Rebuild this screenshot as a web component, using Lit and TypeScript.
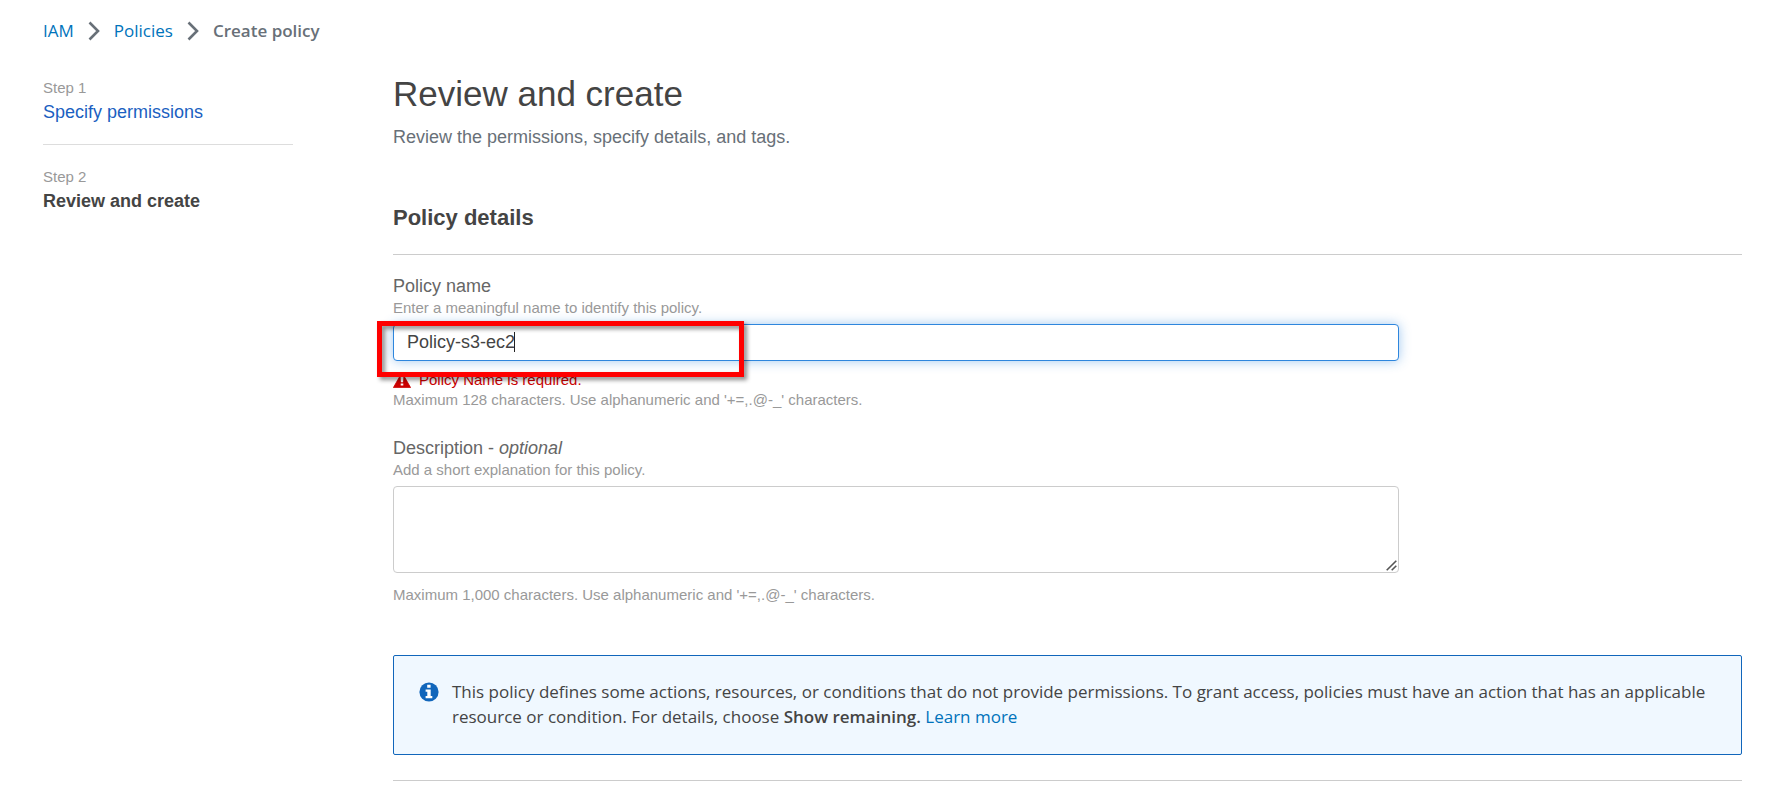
import { LitElement, html, css, svg } from "lit";
import { customElement, state } from "lit/decorators.js";

const chevron = html`<svg class="chevron" viewBox="0 0 12 20" aria-hidden="true">
  ${svg`<path d="M1.5 1.5 L10 10 L1.5 18.5" fill="none" stroke="#687078" stroke-width="2.6" />`}
</svg>`;

@customElement("app-root")
export class AppRoot extends LitElement {
  @state() private policyName = "Policy-s3-ec2";

  static styles = css`
    :host {
      display: block;
      box-sizing: border-box;
      padding: 18px 49px 8px 43px;
      background: #fff;
      color: #444;
      font: 18px/24px "Liberation Sans", Arial, sans-serif;
    }
    *,
    *::before {
      box-sizing: border-box;
    }
    h1,
    h2,
    p,
    ol {
      margin: 0;
      padding: 0;
    }
    ol {
      list-style: none;
    }
    a {
      color: #0073bb;
      text-decoration: none;
    }
    .crumbs ol {
      display: flex;
      align-items: center;
      font: 17px/26px "Open Sans", "Noto Sans", sans-serif;
    }
    .crumbs li {
      display: flex;
      align-items: center;
    }
    .crumbs .current {
      color: #687078;
      font-weight: 600;
    }
    .chevron {
      width: 12px;
      height: 20px;
      margin: 0 14px;
    }
    .layout {
      display: grid;
      grid-template-columns: 250px minmax(0, 1fr);
      column-gap: 100px;
      padding-top: 27px;
    }
    .steps {
      padding-top: 7px;
    }
    .step + .step {
      margin-top: 18px;
      padding-top: 22px;
      border-top: 1px solid #ddd;
    }
    .step a,
    .step strong {
      display: block;
      line-height: 28px;
    }
    .step a {
      color: #1b5fc1;
    }
    .step strong {
      color: #444;
    }
    .hint {
      color: #999;
      font-size: 15px;
      line-height: 20px;
    }
    h1 {
      font-size: 35px;
      font-weight: 400;
      line-height: 46px;
    }
    .lead {
      margin-top: 8px;
      color: #687078;
    }
    h2 {
      margin-top: 54px;
      padding-bottom: 21px;
      border-bottom: 1px solid #ccc;
      font-size: 22px;
      line-height: 30px;
    }
    .fields {
      display: grid;
      grid-template-columns: minmax(0, 3fr) minmax(0, 1fr);
      column-gap: 8px;
      row-gap: 27px;
      padding-top: 20px;
    }
    .field {
      grid-column: 1;
    }
    label {
      display: block;
      color: #666;
      line-height: 23px;
    }
    .control {
      position: relative;
      margin-top: 6px;
    }
    input,
    textarea {
      display: block;
      width: 100%;
      margin: 0;
      padding: 0 13px;
      border: 1px solid #ccc;
      border-radius: 4px;
      outline: none;
      background: #fff;
      color: #444;
      font: inherit;
    }
    input {
      height: 37px;
      border-color: #2e86dd;
      box-shadow: 0 0 12px rgba(46, 134, 221, 0.45);
      caret-color: transparent;
    }
    textarea {
      height: 87px;
      resize: vertical;
    }
    textarea::-webkit-resizer {
      background: transparent;
    }
    .grip {
      position: absolute;
      right: 2px;
      bottom: 2px;
      width: 11px;
      height: 11px;
      pointer-events: none;
    }
    .caret {
      position: absolute;
      top: 8px;
      left: 121px;
      width: 1px;
      height: 20px;
      background: #222;
    }
    .marker {
      position: absolute;
      top: -3px;
      left: -16px;
      width: 367px;
      height: 56px;
      border: 5px solid #f00;
      filter: drop-shadow(3px 3px 2px rgba(0, 0, 0, 0.45));
      pointer-events: none;
    }
    .error {
      display: flex;
      align-items: center;
      gap: 8px;
      margin-top: 8px;
      color: #c00;
      font-size: 15px;
      line-height: 21px;
    }
    .error svg {
      width: 18px;
      height: 16px;
    }
    .limit {
      margin-top: 12px;
    }
    .notice {
      display: flex;
      gap: 13px;
      margin-top: 50px;
      padding: 23px 25px 25px;
      border: 1px solid #1166bb;
      border-radius: 2px;
      background: #f0f8ff;
      font: 17px/25px "Open Sans", "Noto Sans", sans-serif;
    }
    .notice svg {
      flex: none;
      width: 20px;
      height: 20px;
      margin-top: 3px;
    }
    .notice strong {
      font-weight: 600;
    }
    .next {
      margin-top: 25px;
      border-top: 1px solid #ccc;
    }
  `;

  private onName(e: Event) {
    this.policyName = (e.target as HTMLInputElement).value;
  }

  render() {
    return html`
      <nav class="crumbs" aria-label="Breadcrumb">
        <ol>
          <li><a href="#iam">IAM</a>${chevron}</li>
          <li><a href="#policies">Policies</a>${chevron}</li>
          <li class="current" aria-current="page">Create policy</li>
        </ol>
      </nav>
      <div class="layout">
        <ol class="steps">
          <li class="step">
            <div class="hint">Step 1</div>
            <a href="#permissions">Specify permissions</a>
          </li>
          <li class="step">
            <div class="hint">Step 2</div>
            <strong>Review and create</strong>
          </li>
        </ol>
        <main>
          <h1>Review and create</h1>
          <p class="lead">Review the permissions, specify details, and tags.</p>
          <h2>Policy details</h2>
          <div class="fields">
            <div class="field">
              <label for="name">Policy name</label>
              <p class="hint">Enter a meaningful name to identify this policy.</p>
              <div class="control">
                <input id="name" type="text" .value=${this.policyName} @input=${this.onName} />
                <span class="caret"></span>
                <span class="marker"></span>
              </div>
              <p class="error">
                <svg viewBox="0 0 18 16" aria-hidden="true">
                  <path d="M9 0.5 L17.6 15.6 H0.4 Z" fill="#c00" stroke="#c00" stroke-width="0.8" stroke-linejoin="round" />
                  <path d="M7.6 5 H10.4 L10.1 10.2 H7.9 Z M7.7 11.4 H10.3 V13.6 H7.7 Z" fill="#fff" />
                </svg>
                Policy Name is required.
              </p>
              <p class="hint">Maximum 128 characters. Use alphanumeric and '+=,.@-_' characters.</p>
            </div>
            <div class="field">
              <label for="description">Description - <em>optional</em></label>
              <p class="hint">Add a short explanation for this policy.</p>
              <div class="control">
                <textarea id="description"></textarea>
                <svg class="grip" viewBox="0 0 11 11" aria-hidden="true">
                  <path d="M0.7 10.3 L10.3 0.7 M5.7 10.3 L10.3 5.7" fill="none" stroke="#555" stroke-width="1.6" />
                </svg>
              </div>
              <p class="hint limit">Maximum 1,000 characters. Use alphanumeric and '+=,.@-_' characters.</p>
            </div>
          </div>
          <div class="notice" role="note">
            <svg viewBox="0 0 20 20" aria-hidden="true">
              <circle cx="10" cy="10" r="9.6" fill="#1166bb" />
              <path d="M8.2 2.8 H11.6 V5.8 H8.2 Z M6.6 7.6 H11.7 V14 H13.3 V16.2 H6.6 V14 H8.3 V9.7 H6.6 Z" fill="#fff" />
            </svg>
            <p>
              This policy defines some actions, resources, or conditions that do not provide permissions. To grant access,
              policies must have an action that has an applicable resource or condition. For details, choose
              <strong>Show remaining.</strong> <a href="#learn">Learn more</a>
            </p>
          </div>
          <div class="next"></div>
        </main>
      </div>
    `;
  }
}
